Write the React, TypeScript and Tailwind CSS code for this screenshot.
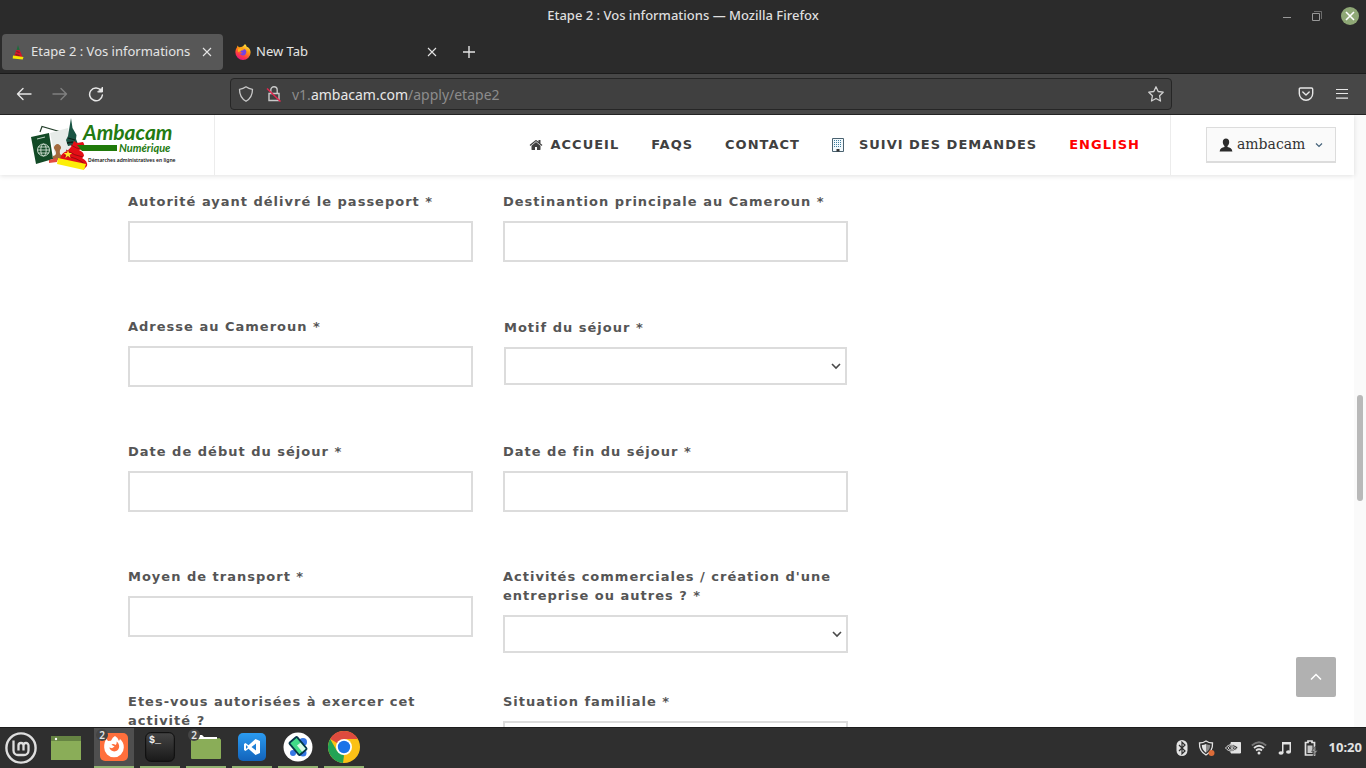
import { useState } from "react";
import type { ReactNode } from "react";

function Cross({ className }: { className: string }) {
  return (
    <svg viewBox="0 0 10 10" className={className} fill="none" stroke="currentColor" strokeWidth="1.1" aria-hidden="true">
      <path d="M1 1l8 8M9 1l-8 8" />
    </svg>
  );
}

function FirefoxLogo() {
  return (
    <svg viewBox="0 0 16 16" className="size-4" aria-hidden="true">
      <defs>
        <linearGradient id="fx" x1="0.8" y1="0" x2="0.3" y2="1">
          <stop offset="0" stopColor="#fff44f" />
          <stop offset="0.4" stopColor="#ff980e" />
          <stop offset="0.75" stopColor="#ff3647" />
          <stop offset="1" stopColor="#e31587" />
        </linearGradient>
      </defs>
      <path d="M10 0c1 1 1.4 1.7 1.7 2.8L13 3.3c1.700 1.200 2.600 3.200 2.600 5.100A7.600 7.600 0 0 1 .4 8.400C.4 6.200 1 4.500 2.200 3l.1-1.500L4 3.300l2-.2C7.500 2.800 9 1.600 10 0z" fill="url(#fx)" />
      <path d="M5 6.500c1-.3 2.100-.4 2.900.2L9 5c2 .6 2.600 2.200 2.300 3.600A3.400 3.400 0 0 1 4.700 9c1 .8 2.300.8 3.300-.2-1.300.1-2.500-.8-3-2.300z" fill="#7542e5" />
      <path d="M3 5c1-.8 2-1 3.200-.6.5.4.8 1 1.600 1.200L5.300 7.300 3 8z" fill="#ffae1a" />
    </svg>
  );
}

function Favicon() {
  return (
    <svg viewBox="0 0 16 16" className="size-4" aria-hidden="true">
      <path d="M8 1l1.800 5.500H6.500z" fill="#1e6b3b" />
      <path d="M6.300 6h3.400l3 7.500-8.400-1.500z" fill="#d3132a" />
      <path d="M6.500 7.500l3 1M5.500 10.500l4 1" stroke="#552020" strokeWidth=".8" />
      <path d="M3 11.500l10.500 1.500-.8 2.600-10-1.200z" fill="#f6e600" />
    </svg>
  );
}

function TitleBar() {
  return (
    <div className="grid h-8 shrink-0 grid-cols-[1fr_auto_1fr] items-center">
      <h1 className="col-start-2 text-[13px] font-medium text-[#dedede]">Etape 2 : Vos informations — Mozilla Firefox</h1>
      <div className="flex items-center justify-end gap-[18px] pr-[7px] text-[#989898]">
        <button aria-label="Réduire" className="flex h-3 w-3 items-center justify-center">
          <svg viewBox="0 0 12 12" className="size-3" aria-hidden="true"><path d="M2 7h8v1H2z" fill="currentColor" /></svg>
        </button>
        <button aria-label="Restaurer">
          <svg viewBox="0 0 12 12" className="size-3" fill="none" stroke="currentColor" aria-hidden="true"><path d="M1.500 3.500h7v7h-7z" /><path d="M3 1.500h7.500V9" opacity=".6" /></svg>
        </button>
        <button aria-label="Fermer" className="flex size-[18px] items-center justify-center rounded-full bg-[#8fa876] text-white">
          <svg viewBox="0 0 10 10" className="size-[10px]" stroke="currentColor" strokeWidth="1.600" aria-hidden="true"><path d="M1 1l8 8M9 1L1 9" /></svg>
        </button>
      </div>
    </div>
  );
}

function TabStrip() {
  return (
    <div className="flex h-[42px] shrink-0 items-start border-b border-[#1c1c1c] pt-[2px] pl-[2px] text-[13px] text-[#e4e4e4]">
      <div className="flex h-9 w-[221px] items-center rounded-[4px] bg-[#575757] pr-[11px] pl-2">
        <Favicon />
        <span className="ml-[5px] flex-1 whitespace-nowrap">Etape 2 : Vos informations</span>
        <button aria-label="Fermer l'onglet"><Cross className="size-[10px]" /></button>
      </div>
      <div className="flex h-9 w-[225px] items-center pr-[11px] pl-3">
        <FirefoxLogo />
        <span className="ml-[5px] flex-1">New Tab</span>
        <button aria-label="Fermer l'onglet"><Cross className="size-[10px]" /></button>
      </div>
      <button aria-label="Nouvel onglet" className="ml-[14px] flex h-9 items-center">
        <svg viewBox="0 0 14 14" className="size-[14px]" stroke="currentColor" strokeWidth="1.400" aria-hidden="true"><path d="M7 1v12M1 7h12" /></svg>
      </button>
    </div>
  );
}

function ToolBar() {
  return (
    <div className="flex h-[41px] shrink-0 items-center border-b border-[#232323] bg-[#474747] pr-4 pl-4 text-[#e6e6e6]">
      <div className="flex w-[214px] shrink-0 items-center gap-5">
        <button aria-label="Précédent">
          <svg viewBox="0 0 16 16" className="size-4" fill="none" stroke="currentColor" strokeWidth="1.400" strokeLinecap="round" strokeLinejoin="round" aria-hidden="true"><path d="M15 8H1.500M7 2.500L1.500 8 7 13.500" /></svg>
        </button>
        <button aria-label="Suivant" className="text-[#808080]">
          <svg viewBox="0 0 16 16" className="size-4" fill="none" stroke="currentColor" strokeWidth="1.400" strokeLinecap="round" strokeLinejoin="round" aria-hidden="true"><path d="M1 8h13.500M9 2.500L14.500 8 9 13.500" /></svg>
        </button>
        <button aria-label="Actualiser">
          <svg viewBox="0 0 16 16" className="size-4" fill="none" stroke="currentColor" strokeWidth="1.500" strokeLinecap="round" aria-hidden="true"><path d="M13 4.300A6.400 6.400 0 1 0 14.400 9" /><path d="M14.500 1.500v4.500H10z" fill="currentColor" strokeWidth="1" strokeLinejoin="round" /></svg>
        </button>
      </div>
      <div className="flex h-8 flex-1 items-center rounded-[4px] border border-[#262626] bg-[#404040] pr-2 pl-[7px] text-[14px] text-[#8c8c8c]">
        <svg viewBox="0 0 16 16" className="size-4 shrink-0" fill="none" stroke="#c9c9c9" strokeWidth="1.300" strokeLinejoin="round" aria-hidden="true"><path d="M8 .8c2 1.600 4.200 2.300 6.500 2.500 0 5.200-1.500 9.200-6.500 12-5-2.800-6.500-6.800-6.500-12C3.800 3.100 6 2.400 8 .8z" /></svg>
        <svg viewBox="0 0 16 16" className="ml-3 size-4 shrink-0" fill="none" stroke="#c9c9c9" strokeWidth="1.400" aria-hidden="true"><path d="M3 7.500h10v7H3zM4.800 7V4a3.200 3.200 0 0 1 6.400 0v3" /><path d="M1 2.500L14.500 15.500" stroke="#e22850" strokeWidth="1.500" /></svg>
        <a href="#url" className="ml-[10px] flex-1 whitespace-nowrap">v1.<span className="text-[#e8e8e8]">ambacam.com</span>/apply/etape2</a>
        <button aria-label="Ajouter aux favoris" className="-mr-px">
          <svg viewBox="0 0 16 16" className="size-4" fill="none" stroke="#d0d0d0" strokeWidth="1.300" strokeLinejoin="round" aria-hidden="true"><path d="M8 .8l2.200 4.700 5 .7-3.600 3.600.9 5.200L8 12.500 3.500 15l.9-5.200L.8 6.200l5-.7z" /></svg>
        </button>
      </div>
      <div className="flex w-[178px] shrink-0 items-center justify-end gap-5">
        <button aria-label="Pocket">
          <svg viewBox="0 0 16 16" className="size-4" fill="none" stroke="currentColor" strokeWidth="1.400" strokeLinecap="round" strokeLinejoin="round" aria-hidden="true"><path d="M2.500 2h11q1.200 0 1.200 1.200V7.500a6.700 6.700 0 0 1-13.400 0V3.200Q1.300 2 2.500 2zM4.800 6L8 9l3.200-3" /></svg>
        </button>
        <button aria-label="Menu">
          <svg viewBox="0 0 16 16" className="size-4" stroke="currentColor" strokeWidth="1.200" aria-hidden="true"><path d="M2 3.500h12M2 7.500h12M2 12.200h12" /></svg>
        </button>
      </div>
    </div>
  );
}

function SiteLogo() {
  return (
    <svg viewBox="0 -2 150 56" className="h-[56px] w-[150px]" role="img" aria-label="Ambacam Numérique">
      <path d="M11 13l2-5.500L39 15" fill="none" stroke="#243f2b" strokeWidth="1.200" />
      <path d="M21 14l18-5 5 22-17 10z" fill="#e6ebe8" />
      <path d="M2 18l18-4 4 26-17 5z" fill="#124a26" />
      <g fill="none" stroke="#d4e2d6" strokeWidth=".9">
        <circle cx="14.500" cy="31" r="6" />
        <ellipse cx="14.500" cy="31" rx="2.700" ry="6" />
        <path d="M9 28h11M9 34h11M8.500 31h12M8 20l8-2" />
      </g>
      <path d="M24 37q5-1 2-6a3.400 3.400 0 1 1 5 0q-1 5 2 5l-1 5-8 1z" fill="#a2693d" />
      <path d="M20 41l8-2v4l-8 1z" fill="#e44b40" />
      <path d="M42-1l1.500 10 4 7-.5 4 2 5-10 2-2-6 2-4z" fill="#1a5544" />
      <path d="M39 19l7 2M38 24l6-1" stroke="#0d1f18" strokeWidth="1.300" />
      <path d="M45 22l3 2 6-1q3 4-1 7l-3 1q5 2 5 6l-2 2q6 3 5 8l-3 3-24-10q1-6 7-8 5-4 7-10z" fill="#e30e15" />
      <path d="M42 26q6 4 10 4M37 31q9 6 17 7M35 37q13 1 22 9" fill="none" stroke="#9a0a10" strokeWidth="1" />
      <path d="M39 31l1 3h3l-2.300 2 .8 3-2.500-2-2.800 2 1-3-2.400-2h3.200z" fill="#ffe72a" />
      <path d="M29 39l28 6-2 6-27-6z" fill="#fdee08" />
      <path d="M48 26h40v6H53z" fill="#207a0a" />
      <text x="54" y="21" fill="#237a10" fontFamily="Lato, sans-serif" fontWeight="700" fontStyle="italic" fontSize="21">Ambacam</text>
      <text x="90" y="33" fill="#237a10" fontFamily="Lato, sans-serif" fontWeight="700" fontStyle="italic" fontSize="11">Numérique</text>
      <text x="59" y="43" fill="#111" fontFamily="Noto Sans, sans-serif" fontWeight="600" fontSize="5">Démarches administratives en ligne</text>
    </svg>
  );
}

function HomeIcon() {
  return (
    <svg viewBox="0 0 1792 1792" className="size-[14px]" fill="currentColor" aria-hidden="true">
      <path d="M1472 992v480q0 26-19 45t-45 19h-384v-384h-256v384h-384q-26 0-45-19t-19-45v-480q0-1 .5-3t.5-3l575-474 575 474q1 2 1 6zm223-69l-62 74q-8 9-21 11h-3q-13 0-21-7l-692-577-692 577q-12 8-24 7-13-2-21-11l-62-74q-8-10-7-23.500t11-21.500l719-599q32-26 76-26t76 26l244 204v-195q0-14 9-23t23-9h192q14 0 23 9t9 23v408l219 182q10 8 11 21.500t-7 23.500z" />
    </svg>
  );
}

function BuildingIcon() {
  return (
    <svg viewBox="0 0 12 14" className="h-[14px] w-3" aria-hidden="true">
      <path d="M.5.5h11v13H.5z" fill="#f2f9fd" stroke="#4a6270" />
      <path d="M2.500 2v8M4.500 2v8M6.500 2v8M8.500 2v8" stroke="#3f7d9c" strokeWidth="1" strokeDasharray="1 1" />
      <path d="M4.500 11h3v2.500h-3z" fill="#333" />
    </svg>
  );
}

function SiteHeader() {
  return (
    <header className="flex h-[60px] shrink-0 items-stretch bg-white shadow-[0_1px_5px_rgba(0,0,0,0.12)]">
      <a href="#accueil" className="flex w-[215px] shrink-0 items-center border-r border-[#ececec] pl-[29px]">
        <SiteLogo />
      </a>
      <nav className="flex flex-1 items-center justify-end gap-8 pr-[30px] font-['DejaVu_Sans',sans-serif] text-[13px] font-bold tracking-[1px] whitespace-nowrap text-[#404040]">
        <a href="#accueil" className="flex items-center gap-[7px]"><HomeIcon />ACCUEIL</a>
        <a href="#faqs">FAQS</a>
        <a href="#contact">CONTACT</a>
        <a href="#suivi" className="flex items-center gap-[15px]"><BuildingIcon />SUIVI DES DEMANDES</a>
        <a href="#english" className="text-[#ff0000]">ENGLISH</a>
      </nav>
      <div className="flex w-[184px] shrink-0 items-center justify-end border-l border-[#ececec] pr-[18px]">
        <button className="flex h-9 w-[130px] items-center border border-b-2 border-[#dcdcdc] bg-[#fafafa] pl-3 font-['DejaVu_Serif',serif] text-[14px] text-[#333]">
          <svg viewBox="0 0 14 14" className="size-[14px]" fill="#2b2b2b" aria-hidden="true"><path d="M7 .5c2 0 3.200 1.400 3.200 3.500 0 1.700-.7 3.200-1.700 3.900v1.200c2.500.6 4.500 1.500 4.900 4.400H.6C1 10.600 3 9.700 5.500 9.100V7.900C4.500 7.200 3.800 5.700 3.800 4 3.800 1.900 5 .5 7 .5z" /></svg>
          <span className="ml-1">ambacam</span>
          <svg viewBox="0 0 8 8" className="ml-[10px] size-2" fill="none" stroke="#44627a" strokeWidth="1.200" aria-hidden="true"><path d="M1 2.500l3 3 3-3" /></svg>
        </button>
      </div>
    </header>
  );
}

type FieldData = { id: string; label: string; kind: "text" | "select"; inset?: boolean };

const fields: FieldData[] = [
  { id: "autorite", label: "Autorité ayant délivré le passeport *", kind: "text" },
  { id: "destination", label: "Destinantion principale au Cameroun *", kind: "text" },
  { id: "adresse", label: "Adresse au Cameroun *", kind: "text" },
  { id: "motif", label: "Motif du séjour *", kind: "select", inset: true },
  { id: "debut", label: "Date de début du séjour *", kind: "text" },
  { id: "fin", label: "Date de fin du séjour *", kind: "text" },
  { id: "transport", label: "Moyen de transport *", kind: "text" },
  { id: "activites", label: "Activités commerciales / création d'une entreprise ou autres ? *", kind: "select" },
  { id: "autorisation", label: "Etes-vous autorisées à exercer cet activité ?", kind: "text" },
  { id: "situation", label: "Situation familiale *", kind: "text" },
];

function Field({ field }: { field: FieldData }) {
  const [value, setValue] = useState("");
  return (
    <div className={field.inset ? "p-px" : ""}>
      <label htmlFor={field.id} className="mb-[10px] block text-[13px] leading-[19px] font-bold tracking-[1px] text-[#555]">
        {field.label}
      </label>
      {field.kind === "text" ? (
        <input id={field.id} type="text" value={value} onChange={(e) => setValue(e.target.value)} className="block h-[41px] w-full border-2 border-[#dcdcdc] bg-white px-3" />
      ) : (
        <div className="grid items-center">
          <select id={field.id} value={value} onChange={(e) => setValue(e.target.value)} className="col-start-1 row-start-1 h-[38px] w-full appearance-none border-2 border-[#dcdcdc] bg-white px-3">
            <option value=""></option>
          </select>
          <svg viewBox="0 0 10 10" className="pointer-events-none col-start-1 row-start-1 mr-[6px] size-[10px] justify-self-end" fill="none" stroke="#4a4a4a" strokeWidth="1.600" aria-hidden="true"><path d="M1 3l4 4 4-4" /></svg>
        </div>
      )}
    </div>
  );
}

function Page() {
  return (
    <div className="flex min-h-0 flex-1 overflow-hidden bg-white">
      <div className="relative flex min-w-0 flex-1 flex-col">
        <SiteHeader />
        <main className="min-h-0 flex-1 overflow-hidden pt-[17px] pl-32">
          <form className="grid max-w-[720px] auto-rows-[125px] grid-cols-2 gap-x-[30px] font-['DejaVu_Sans',sans-serif]">
            {fields.map((f) => <Field key={f.id} field={f} />)}
          </form>
        </main>
        <button aria-label="Haut de page" className="absolute right-[18px] bottom-[30px] flex size-10 items-center justify-center rounded-[2px] bg-[#b1b1b1] text-white">
          <svg viewBox="0 0 12 12" className="size-3" fill="none" stroke="currentColor" strokeWidth="1.500" aria-hidden="true"><path d="M1 8.500l5-5 5 5" /></svg>
        </button>
      </div>
      <div className="flex w-3 shrink-0 justify-center bg-[#fafafa] pt-[280px]">
        <div className="h-[106px] w-[6px] rounded-full bg-[#b9b9b9]" />
      </div>
    </div>
  );
}

function TaskItem({ label, active, count, children }: { label: string; active?: boolean; count?: number; children: ReactNode }) {
  return (
    <button aria-label={label} className={active ? "relative flex h-full w-10 items-center justify-center border-b-2 border-[#92b372] bg-[#4f4f4f]" : "relative flex h-full w-10 items-center justify-center border-b-2 border-[#92b372]"}>
      {children}
      {count ? <span className="absolute top-px left-[2px] flex size-3 items-center justify-center rounded-full bg-[#444] text-[10px] font-semibold text-[#e4e4e4]">{count}</span> : null}
    </button>
  );
}

function TaskBar() {
  return (
    <footer className="flex h-[41px] shrink-0 items-center border-t border-[#1d1d1d] bg-[#2f2f2f]">
      <button aria-label="Menu Mint" className="ml-[5px]">
        <svg viewBox="0 0 32 32" className="size-8" fill="none" stroke="#dedede" aria-hidden="true">
          <circle cx="16" cy="16" r="14.600" strokeWidth="2.400" />
          <path d="M8.500 8.500v10a4.500 4.500 0 0 0 4.500 4.500h6a4.500 4.500 0 0 0 4.500-4.500v-5a2.500 2.500 0 0 0-5 0v5M18.500 18.500v-5a2.500 2.500 0 0 0-5 0v5" strokeWidth="2.300" />
        </svg>
      </button>
      <button aria-label="Bureau" className="ml-[14px]">
        <svg viewBox="0 0 30 24" className="h-6 w-[30px]" aria-hidden="true"><path d="M0 0h30v24H0z" fill="#8aad58" /><path d="M0 0h30v5H0z" fill="#668443" /><circle cx="5" cy="3" r="1.200" fill="#fff" /></svg>
      </button>
      <div className="ml-[13px] flex h-full gap-[6px]">
        <TaskItem label="Firefox" active count={2}>
          <svg viewBox="0 0 30 30" className="size-[30px]" aria-hidden="true">
            <rect x="1" y="1" width="28" height="28" rx="5" fill="#ff6f3c" />
            <path d="M16 4q3.500 2 4 5l1-2c2.500 2 4 5 3.800 8.500A9.800 9.800 0 0 1 5.200 15.500C5 12 6 9 7.500 6.800L9 9l3-.3q1.500-3.700 4-4.700z" fill="#fff" />
            <path d="M17.500 9.500c3 2 3.500 6 1.500 8.300-3 3-8 1.500-8.700-2.300l2.700.7 2.600-1.700-3.100-1.700c1-1.300 2.600-.6 4 .3 1.200-1 1.400-2.200 1-3.600z" fill="#ff6f3c" />
          </svg>
        </TaskItem>
        <TaskItem label="Terminal">
          <svg viewBox="0 0 30 30" className="size-[30px]" aria-hidden="true">
            <defs><linearGradient id="term" x2="0" y2="1"><stop stopColor="#444" /><stop offset="1" stopColor="#191919" /></linearGradient></defs>
            <rect x=".7" y=".7" width="28.600" height="28.600" rx="5" fill="url(#term)" stroke="#0c0c0c" />
            <text x="4" y="11" fill="#f4f4f4" fontFamily="Liberation Mono, monospace" fontWeight="700" fontSize="10">$_</text>
          </svg>
        </TaskItem>
        <TaskItem label="Fichiers" count={2}>
          <svg viewBox="0 0 30 26" className="h-[26px] w-[30px]" aria-hidden="true">
            <path d="M1 1h10l2 3h16v4H1z" fill="#6c8e44" /><path d="M5 1h6l2 2h13v5H5z" fill="#fff" /><rect y="5" width="30" height="20" rx="1" fill="#8aad58" />
          </svg>
        </TaskItem>
        <TaskItem label="Visual Studio Code">
          <svg viewBox="0 0 30 30" className="size-[30px]" aria-hidden="true">
            <defs><linearGradient id="code" x2="0" y2="1"><stop stopColor="#2b9bf0" /><stop offset="1" stopColor="#1263bb" /></linearGradient></defs>
            <rect x="1" y="1" width="28" height="28" rx="5" fill="url(#code)" />
            <path d="M18.500 7l4.500 2v12l-4.500 2-7-6.200L8.500 19 7 18v-6l1.500-1 3 2.200zM19 11.500L14.500 15l4.500 3.500zM9 13v4l2-2z" fill="#fff" fillRule="evenodd" />
          </svg>
        </TaskItem>
        <TaskItem label="Émulateur">
          <svg viewBox="0 0 30 30" className="size-[30px]" aria-hidden="true">
            <circle cx="15" cy="15" r="14.500" fill="#fff" />
            <circle cx="20" cy="10" r="4" fill="#3577e5" /><circle cx="10" cy="21" r="3" fill="#3577e5" /><circle cx="20" cy="21" r="3.500" fill="#3577e5" />
            <g transform="rotate(-40 15 14)"><rect x="10" y="6" width="10" height="16" rx="1" fill="#42db88" stroke="#06364a" strokeWidth="1.800" /><path d="M14.500 13H19v8h-4.500z" fill="#d9f9e5" /></g>
          </svg>
        </TaskItem>
        <TaskItem label="Chrome">
          <svg viewBox="0 0 32 32" className="size-8" aria-hidden="true">
            <circle cx="16" cy="16" r="16" fill="#fbc116" />
            <path d="M16 16L2.140 8A16 16 0 0 1 29.860 8H16z" fill="#dd4b3e" />
            <path d="M2.140 8L9 20l7 4.500L15 32A16 16 0 0 1 2.140 8z" fill="#22a355" />
            <circle cx="16" cy="16" r="8" fill="#fff" /><circle cx="16" cy="16" r="6.200" fill="#1b73e8" />
          </svg>
        </TaskItem>
      </div>
      <div className="ml-auto flex items-center gap-[10px] pr-1 text-[#e2e2e2]">
        <svg viewBox="0 0 12 16" className="h-4 w-3" aria-hidden="true"><rect x=".5" width="11" height="16" rx="5.500" fill="currentColor" /><path d="M3 5l6 6-3 2.800V2.200L9 5l-6 6" fill="none" stroke="#2f2f2f" strokeWidth="1.200" /></svg>
        <svg viewBox="0 0 17 16" className="h-4 w-[17px]" aria-hidden="true"><path d="M8 1c2 1.500 4 2 6.500 2 .3 5-1.500 9.300-6.500 12C3 12.300 1.200 8 1.500 3 4 3 6 2.500 8 1z" fill="none" stroke="currentColor" strokeWidth="1.300" /><path d="M8 4v8.700c3-2.100 4.200-4.400 4.200-7.600C10.700 5 9.300 4.700 8 4z" fill="#8a8a8a" /><path d="M8 4v8.700C5 10.600 3.800 8.300 3.800 5.100 5.300 5 6.700 4.700 8 4z" fill="#e2e2e2" /><circle cx="13.500" cy="13" r="3" fill="#dd6c38" /></svg>
        <svg viewBox="0 0 16 12" className="h-3 w-4" fill="none" stroke="currentColor" aria-hidden="true"><path d="M6 .5h9.500v10.500H6z" fill="currentColor" /><path d="M.5 6C4 1.500 9 1.500 13 5.500 10 10 4 10.500.500 6z" fill="#2f2f2f" /><path d="M3 6c2-3 5-3 7.500 0C8 8.500 5 8.500 3 6z" /><circle cx="7" cy="5.800" r="1" /></svg>
        <svg viewBox="0 0 16 14" className="h-[14px] w-4" fill="none" stroke="currentColor" strokeWidth="1.700" aria-hidden="true"><path d="M.8 4.500Q8-2 15.200 4.500" opacity=".4" /><path d="M3 7q5-4.500 10 0M5 9.500q3-2.500 6 0" /><circle cx="8" cy="12" r="1.500" fill="currentColor" stroke="none" /></svg>
        <svg viewBox="0 0 16 14" className="h-[14px] w-4" fill="currentColor" aria-hidden="true"><path d="M5 1h9v10h-1.500V3.500h-6V12H5z" /><ellipse cx="4" cy="12" rx="2.500" ry="1.800" /><ellipse cx="11.500" cy="11" rx="2.500" ry="1.800" /></svg>
        <svg viewBox="0 0 16 16" className="h-4 w-4" aria-hidden="true"><path d="M5 1h4v1.500h2.500V15H2.500V2.500H5z" fill="none" stroke="currentColor" strokeWidth="1.700" /><path d="M4.500 5.500h5V13h-5z" fill="currentColor" opacity=".85" /><path d="M12.500 6L8.500 11.500h2.500L10 16l4.800-5.500H12z" fill="#999" stroke="#2f2f2f" strokeWidth=".5" /></svg>
        <time className="text-[13px] font-bold">10:20</time>
      </div>
    </footer>
  );
}

export default function App() {
  return (
    <div className="flex h-screen flex-col overflow-hidden bg-[#2b2b2b] font-['Noto_Sans',sans-serif]">
      <TitleBar />
      <TabStrip />
      <ToolBar />
      <Page />
      <TaskBar />
    </div>
  );
}
